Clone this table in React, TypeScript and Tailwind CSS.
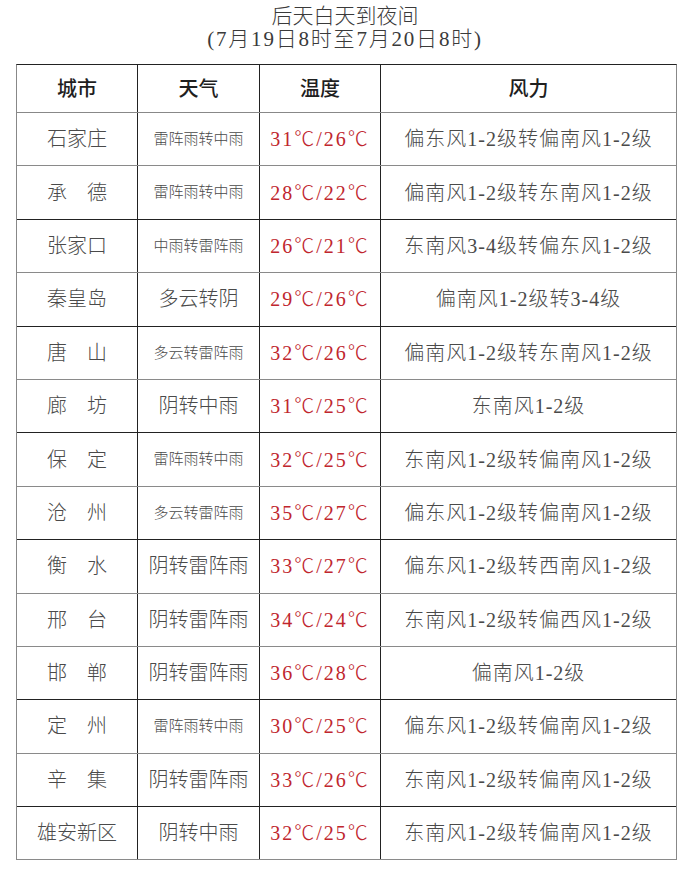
const rows: { city: string; weather: string; small?: boolean; temp: string; wind: string; dark?: boolean }[] = [
  { city: '石家庄', weather: '雷阵雨转中雨', small: true, temp: '31℃/26℃', wind: '偏东风1-2级转偏南风1-2级' },
  { city: '承　德', weather: '雷阵雨转中雨', small: true, temp: '28℃/22℃', wind: '偏南风1-2级转东南风1-2级', dark: true },
  { city: '张家口', weather: '中雨转雷阵雨', small: true, temp: '26℃/21℃', wind: '东南风3-4级转偏东风1-2级' },
  { city: '秦皇岛', weather: '多云转阴', temp: '29℃/26℃', wind: '偏南风1-2级转3-4级', dark: true },
  { city: '唐　山', weather: '多云转雷阵雨', small: true, temp: '32℃/26℃', wind: '偏南风1-2级转东南风1-2级' },
  { city: '廊　坊', weather: '阴转中雨', temp: '31℃/25℃', wind: '东南风1-2级', dark: true },
  { city: '保　定', weather: '雷阵雨转中雨', small: true, temp: '32℃/25℃', wind: '东南风1-2级转偏南风1-2级' },
  { city: '沧　州', weather: '多云转雷阵雨', small: true, temp: '35℃/27℃', wind: '偏东风1-2级转偏南风1-2级', dark: true },
  { city: '衡　水', weather: '阴转雷阵雨', temp: '33℃/27℃', wind: '偏东风1-2级转西南风1-2级' },
  { city: '邢　台', weather: '阴转雷阵雨', temp: '34℃/24℃', wind: '东南风1-2级转偏西风1-2级' },
  { city: '邯　郸', weather: '阴转雷阵雨', temp: '36℃/28℃', wind: '偏南风1-2级', dark: true },
  { city: '定　州', weather: '雷阵雨转中雨', small: true, temp: '30℃/25℃', wind: '偏东风1-2级转偏南风1-2级' },
  { city: '辛　集', weather: '阴转雷阵雨', temp: '33℃/26℃', wind: '东南风1-2级转偏南风1-2级', dark: true },
  { city: '雄安新区', weather: '阴转中雨', temp: '32℃/25℃', wind: '东南风1-2级转偏南风1-2级' },
]

export default function App() {
  return (
    <div
      className="w-[690px] h-[892px] bg-white text-[#4a4a4a] pt-[5px] font-light"
      style={{ fontFamily: '"Liberation Serif", "Noto Sans CJK SC", serif' }}
    >
      {/* Title */}
      <div className="text-center text-[21px] leading-[23px] text-[#3a3a3a]">
        <p>后天白天到夜间</p>
        <p className="tracking-[1.8px]">(7月19日8时至7月20日8时)</p>
      </div>

      {/* Table */}
      <div className="ml-[16px] mt-[13px] w-[661px] border-t border-t-[#222] border-x border-x-[#888]">
        <div className="grid grid-cols-[121px_122px_121px_1fr] h-[48px] border-b border-b-[#888] text-[20px] text-[#1f1f1f] font-medium">
          <div className="flex items-center justify-center border-r border-r-[#222]">城市</div>
          <div className="flex items-center justify-center border-r border-r-[#222]">天气</div>
          <div className="flex items-center justify-center border-r border-r-[#222]">温度</div>
          <div className="flex items-center justify-center">风力</div>
        </div>

        {rows.map((row) => (
          <div
            key={row.city}
            className={`grid grid-cols-[121px_122px_121px_1fr] h-[53.4px] border-b ${
              row.dark ? 'border-b-[#222]' : 'border-b-[#8a8a8a]'
            }`}
          >
            <div className="flex items-center justify-center border-r border-r-[#222] text-[20px]">{row.city}</div>
            <div
              className={`flex items-center justify-center border-r border-r-[#222] ${
                row.small ? 'text-[15px]' : 'text-[20px]'
              }`}
            >
              {row.weather}
            </div>
            <div className="flex items-center justify-center border-r border-r-[#222] text-[20px] tracking-[2px] text-[#c0262e]">
              {row.temp}
            </div>
            <div className="flex items-center justify-center text-[20px] tracking-[1px]">{row.wind}</div>
          </div>
        ))}
      </div>
    </div>
  )
}
